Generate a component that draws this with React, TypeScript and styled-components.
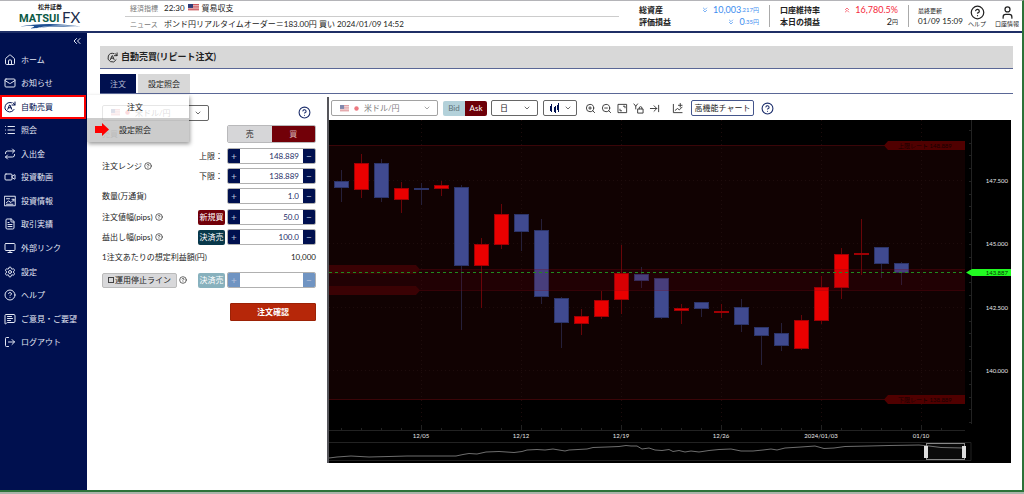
import React from "react";
import styled, { createGlobalStyle, css } from "styled-components";
import {
  ArrowRightToLine,
  ChevronDown,
  ChevronsDown,
  ChevronsLeft,
  ChevronsUp,
  CircleQuestionMark,
  FileText,
  House,
  List,
  LogOut,
  Mail,
  MessageSquareText,
  Monitor,
  Repeat,
  Settings,
  User,
  Video,
  ZoomIn,
  ZoomOut,
} from "lucide-react";

const NAVY = "#00104f";
const INK = "#222";
const RULE = "#5a6796";

const GlobalStyle = createGlobalStyle`
  *, *::before, *::after { box-sizing: border-box; }
  body {
    margin: 0;
    background: #fff;
    color: ${INK};
    font: 8px/12px Lato, "Noto Sans CJK JP", sans-serif;
  }
  button, input, select { font: inherit; color: inherit; margin: 0; padding: 0; }
  button { cursor: pointer; }
  a { color: inherit; text-decoration: none; }
  ul, dl, dd, h1, p { margin: 0; padding: 0; list-style: none; }
  svg { display: block; flex: none; }
`;

const Page = styled.div`
  min-height: 100vh;
  display: flex;
  flex-direction: column;
  padding-bottom: 2px;
  background: #a9b5aa;
`;

const Frame = styled.div`
  flex: 1;
  display: flex;
  flex-direction: column;
  background: #fff;
  border-top: 1px solid #b4b4b8;
  border-right: 2px solid #2c7238;
  border-bottom: 2px solid #2c7238;
`;

/* ---------- header ---------- */

const Header = styled.header`
  height: 32px;
  display: flex;
  border-bottom: 2px solid #1f2f66;
`;

const Logo = styled.a`
  width: 125px;
  padding-left: 18px;
`;

const News = styled.dl`
  flex: 1;
  padding-right: 10px;
  white-space: nowrap;
`;

const NewsRow = styled.div`
  height: 15px;
  display: flex;
  align-items: center;
  padding: 0 0 2px 5px;
  & + & { padding-bottom: 0; border-top: 1px solid #ccc; }
  dt { width: 34px; color: #777; font-size: 7px; }
  dd { display: flex; align-items: center; gap: 3px; }
`;

const Account = styled.div`
  display: flex;
  align-items: center;
`;

const Figures = styled.dl<{ $width: number }>`
  width: ${(p) => p.$width}px;
  height: 22px;
  padding: 0 10px;
  border-right: 1px solid #aaa;
  display: flex;
  flex-direction: column;
  justify-content: center;
  div { display: flex; justify-content: space-between; height: 13px; align-items: center; }
  dt { font-weight: 700; }
`;

const Amount = styled.dd<{ $tone?: string }>`
  display: flex;
  align-items: center;
  color: ${(p) => p.$tone ?? INK};
  font-size: 9px;
  small { font-size: 6px; }
  svg { margin-right: 4px; }
`;

const Updated = styled.p`
  width: 53px;
  padding-left: 9px;
  line-height: 11px;
  white-space: nowrap;
  small { display: block; font-size: 6px; }
`;

const HeaderButton = styled.button`
  width: 30px;
  border: 0;
  background: none;
  display: flex;
  flex-direction: column;
  align-items: center;
  font-size: 6px;
  line-height: 8px;
  white-space: nowrap;
`;

/* ---------- side menu ---------- */

const Columns = styled.div`
  flex: 1;
  display: flex;
`;

const Side = styled.nav`
  width: 87px;
  flex: none;
  background: ${NAVY};
  color: #e4e8f4;
`;

const Collapse = styled.button`
  display: block;
  width: 100%;
  height: 15px;
  padding-right: 4px;
  border: 0;
  background: none;
  svg { margin-left: auto; }
`;

const Menu = styled.ul`
  height: 306px;
  display: flex;
  flex-direction: column;
`;

const MenuItem = styled.li`
  flex: 1;
  display: flex;
  position: relative;
`;

const MenuLink = styled.a<{ $active?: boolean }>`
  flex: 1;
  display: flex;
  align-items: center;
  gap: 5px;
  padding-left: 4px;
  white-space: nowrap;
  ${(p) =>
    p.$active &&
    css`
      margin-right: 1px;
      padding-left: 2px;
      border: 2px solid #f00;
      background: #fff;
      color: ${NAVY};
    `}
`;

const SubMenu = styled.ul`
  position: absolute;
  z-index: 2;
  left: 87px;
  top: 0;
  width: 102px;
  box-shadow: 1px 2px 4px rgba(0, 0, 0, 0.4);
`;

const SubLink = styled.a<{ $current?: boolean }>`
  display: flex;
  align-items: center;
  justify-content: center;
  position: relative;
  height: ${(p) => (p.$current ? 24 : 23)}px;
  padding-right: 6px;
  color: ${INK};
  background: ${(p) => (p.$current ? "rgba(200,200,200,.92)" : "rgba(255,255,255,.84)")};
  svg { position: absolute; left: 8px; top: 5px; }
`;

/* ---------- main ---------- */

const Main = styled.main`
  flex: 1;
  min-width: 0;
  padding: 13px 9px 27px 13px;
`;

const Title = styled.h1`
  height: 23px;
  display: flex;
  align-items: center;
  gap: 3px;
  padding-left: 7px;
  background: #d8d8d8;
  border-bottom: 1px solid ${RULE};
  font-size: 9px;
`;

const Tabs = styled.div`
  display: flex;
  gap: 2px;
  margin-top: 5px;
  border-bottom: 1px solid ${RULE};
`;

const Tab = styled.button<{ $on?: boolean }>`
  height: 19px;
  padding: 0 10px;
  border: 0;
  background: ${(p) => (p.$on ? NAVY : "#d8d8d8")};
  color: ${(p) => (p.$on ? "#b5bcd4" : INK)};
`;

const Body = styled.div`
  display: grid;
  grid-template-columns: 227px minmax(0, 1fr);
  margin-top: 3px;
`;

/* ---------- order form ---------- */

const Form = styled.form`
  display: flex;
  flex-direction: column;
  padding: 8px 11px 0 2px;
`;

const Row = styled.div<{ $top?: number; $height?: number }>`
  display: flex;
  align-items: center;
  height: ${(p) => p.$height ?? 20}px;
  margin-top: ${(p) => p.$top ?? 0}px;
  white-space: nowrap;
`;

const RowLabel = styled.span`
  flex: 1;
  display: flex;
  align-items: center;
  gap: 2px;
`;

const RangeGroup = styled.div`
  display: flex;
  align-items: center;
  margin-top: 3px;
`;

const RangeRow = styled(Row)`
  gap: 4px;
`;

const SelectBox = styled.span<{ $width: number; $muted?: boolean; $tight?: boolean }>`
  width: ${(p) => p.$width}px;
  height: 16px;
  display: flex;
  align-items: center;
  gap: ${(p) => (p.$tight ? 1 : 3)}px;
  padding: ${(p) => (p.$tight ? "0 4px 0 6px" : "0 6px 0 8px")};
  border: 1px solid #666;
  border-radius: 2px;
  background: #fff;
  opacity: ${(p) => (p.$muted ? 0.6 : 1)};
  select {
    flex: 1;
    min-width: 0;
    appearance: none;
    border: 0;
    background: none;
  }
`;

const HelpButton = styled.button`
  border: 0;
  background: none;
  color: #1b2d6b;
`;

const Sides = styled.div`
  width: 89px;
  height: 18px;
  margin-left: auto;
  display: flex;
  border: 1px solid #b9b9bb;
  border-radius: 2px;
  overflow: hidden;
`;

const SideButton = styled.button<{ $buy?: boolean }>`
  flex: 1;
  border: 0;
  background: ${(p) => (p.$buy ? "#720008" : "#d6d6d8")};
  color: ${(p) => (p.$buy ? "#d3aeb0" : INK)};
`;

const Tag = styled.span<{ $color: string }>`
  width: 27px;
  height: 15px;
  margin-right: 2px;
  border-radius: 2px;
  background: ${(p) => p.$color};
  color: #fff;
  text-align: center;
  line-height: 15px;
`;

const StepperBox = styled.span<{ $off?: boolean }>`
  width: 89px;
  height: 16px;
  display: flex;
  border: 1px solid #b0b0b0;
  border-radius: 2px;
  overflow: hidden;
  button {
    width: 12px;
    border: 0;
    background: ${(p) => (p.$off ? "#7094c2" : NAVY)};
    color: #b9c2dc;
    font-size: 10px;
  }
  input {
    flex: 1;
    min-width: 0;
    padding-right: 4px;
    border: 0;
    background: #fff;
    color: #1d2c66;
    text-align: right;
  }
`;

const StopToggle = styled.label`
  display: flex;
  align-items: center;
  justify-content: center;
  gap: 1px;
  width: 75px;
  height: 15px;
  border: 1px solid #bbb;
  border-radius: 2px;
  background: #d8d8da;
  input {
    appearance: none;
    width: 6px;
    height: 6px;
    border: 1px solid #444;
  }
`;

const Submit = styled.button`
  width: 86px;
  height: 18px;
  margin: 13px 0 0 auto;
  border: 1px solid #9c2206;
  border-radius: 1px;
  background: #b62709;
  color: #fff;
  font-weight: 700;
`;

/* ---------- chart panel ---------- */

const ChartPanel = styled.section`
  padding-right: 2px;
  border-left: 2px solid #55555a;
`;

const Toolbar = styled.div`
  display: flex;
  align-items: center;
  height: 23px;
  padding: 0 2px 1px;
`;

const ToolSpace = styled.span<{ $w: number }>`
  width: ${(p) => p.$w}px;
`;

const PriceSide = styled.button<{ $on?: boolean }>`
  width: 22px;
  height: 15px;
  border: 0;
  border-radius: ${(p) => (p.$on ? "0 2px 2px 0" : "2px 0 0 2px")};
  background: ${(p) => (p.$on ? "#6d0008" : "#b3d1da")};
  color: ${(p) => (p.$on ? "#fff" : "#5f7278")};
`;

const Tools = styled.div`
  display: flex;
  align-items: center;
  gap: 5px;
`;

const Tool = styled.button`
  display: block;
  border: 0;
  background: none;
  color: #333;
`;

const AdvancedButton = styled.button`
  width: 63px;
  height: 16px;
  border: 1px solid #44558c;
  border-radius: 2px;
  background: #fff;
  white-space: nowrap;
`;

const ChartSvg = styled.svg`
  width: 100%;
  height: auto;
  background: #000;
  font-family: Lato, "Noto Sans CJK JP", sans-serif;
`;

/* ---------- drawings ---------- */

const line = {
  fill: "none",
  stroke: "currentColor",
  strokeWidth: 2,
  strokeLinecap: "round" as const,
  strokeLinejoin: "round" as const,
  viewBox: "0 0 24 24",
};

const AutoIcon = ({ size = 12 }: { size?: number }) => (
  <svg {...line} width={size} height={size}>
    <path d="M15 3.500A9.500 9.500 0 1 0 20 17" />
    <path d="M16 8h6V2M22 8l-4-4.500" />
    <path d="M7.500 16.500L11 8h1l3.500 8.500M9 13.500h5" />
  </svg>
);

const InfoIcon = () => (
  <svg {...line} width={12} height={12}>
    <path d="M1.500 2.500h21v19h-21zM5 7.500h6M5 15l4-3 5 3 6-6M16 8.500h4v4M5 18.500h13" />
  </svg>
);

const FitIcon = () => (
  <svg {...line} width={11} height={11}>
    <path d="M3 3h18v18H3zM14 7h3.500v3.500M6.500 13.500V17H10" />
  </svg>
);

const AxisLockIcon = () => (
  <svg {...line} width={11} height={11}>
    <path d="M2 2l4 5 4-5M6 7v6M11 13h11v9H11zM13.500 13v-2a3 3 0 0 1 6 0v2" />
  </svg>
);

const AddIndicatorIcon = () => (
  <svg {...line} width={11} height={11}>
    <path d="M3 3v18h19M7 16l5-4 4 3 6-6M18 1v8M14 5h8" />
  </svg>
);

const CandlesIcon = () => (
  <svg width={10} height={10} viewBox="0 0 10 10" fill={NAVY}>
    <path d="M0 3h2v5H0zM4 4h2v5H4zM7 2h2v5H7zM1 1h1v8H1zM5 3h1v7H5zM8 0h1v9H8z" />
  </svg>
);

const UsFlag = ({ w = 9 }: { w?: number }) => (
  <svg width={w} height={7} viewBox="0 0 11 8" preserveAspectRatio="none">
    <path fill="#f3dcdc" d="M0 0h11v8H0z" />
    <path stroke="#c8444e" strokeWidth="1" d="M0 .5h11M0 2.500h11M0 4.500h11M0 6.500h11" />
    <path fill="#2f3c78" d="M0 0h5v4.500H0z" />
  </svg>
);

const JpFlag = () => (
  <svg width={9} height={7} viewBox="0 0 9 7">
    <path fill="#fff" d="M0 0h9v7H0z" />
    <circle cx="4.500" cy="3.500" r="2.200" fill="#e2202c" />
  </svg>
);

const LogoMark = () => (
  <svg width={66} height={29} viewBox="0 0 66 29">
    <text x="20" y="8" fontSize="6" fontWeight="700" fill="#222" fontFamily="Lato, 'Noto Sans CJK JP', sans-serif">
      松井証券
    </text>
    <text x="1" y="21" fontSize="11" fontWeight="700" fill="#0c5a45" fontFamily="Roboto, sans-serif">
      MATSUI
    </text>
    <text x="44" y="22" fontSize="15" fill="#1c2c4c" fontFamily="Lato, sans-serif">
      FX
    </text>
    <path d="M2 25.500C18 22 42 22 63 25.500C42 23.800 28 24.500 16 27.500Q32 24 63 25.500Q30 25 12 27.500Q24 23.500 2 25.500Z" fill="#1d4f93" />
  </svg>
);

const RedArrow = () => (
  <svg width={14} height={13} viewBox="0 0 14 13">
    <path d="M0 3h7V0l7 6.500L7 13v-3H0z" fill="#f00" />
  </svg>
);

/* ---------- chart ---------- */

type Candle = [up: 0 | 1, high: number, top: number, bottom: number, low: number];

const candles: Candle[] = [
  [0, 50, 61, 68, 82],
  [1, 34, 43, 70, 78],
  [0, 39, 43, 78, 82],
  [1, 62, 68, 80, 93],
  [0, 63, 68, 70, 85],
  [1, 61, 65, 69, 76],
  [0, 65, 67, 146, 210],
  [1, 118, 124, 146, 188],
  [1, 84, 94, 125, 129],
  [0, 94, 94, 112, 131],
  [0, 99, 110, 177, 184],
  [0, 177, 178, 203, 228],
  [1, 189, 196, 204, 215],
  [1, 171, 180, 197, 199],
  [1, 125, 153, 180, 194],
  [0, 147, 154, 161, 168],
  [0, 158, 158, 198, 199],
  [1, 184, 188, 191, 204],
  [0, 182, 182, 189, 197],
  [1, 184, 191, 193, 198],
  [0, 179, 187, 205, 212],
  [0, 207, 207, 216, 245],
  [0, 203, 213, 226, 231],
  [1, 195, 200, 229, 230],
  [1, 156, 167, 201, 204],
  [1, 128, 134, 168, 179],
  [1, 99, 133, 135, 155],
  [0, 127, 127, 144, 158],
  [0, 142, 143, 153, 165],
];

const dates = ["12/05", "12/12", "12/19", "12/26", "2024/01/03", "01/10"];
const prices: [string, number][] = [
  ["147.500", 61],
  ["145.000", 124],
  ["142.500", 188],
  ["140.000", 251],
];

const overview =
  "0,338 8,337 22,336 40,337 60,336.500 78,336 127,336 134,334.500 140,333.500 148,334 157,332 170,331.500 185,332.500 193,331.500 198,330 208,329.500 216,330 224,329 230,330 236,331 240,330 258,329 264,327.500 278,327 290,326.500 297,325.500 302,326 308,326 313,329 320,328 326,330 333,330.500 340,329.500 344,331.500 350,330.500 356,332 362,331 370,332 380,330.500 390,329.500 402,329 412,331 424,331 434,330 442,329 448,330 456,328 472,327 486,326 495,328.500 505,328 516,326.500 540,326 560,325.500 590,325 600,326 612,327.500 635,328";

const Chart = () => (
  <ChartSvg viewBox="0 0 682 343" role="img" aria-label="米ドル/円 日足チャート">
    <rect y="25" width="636" height="254" fill="#110202" />
    <path d="M0 25.500h636M0 279.500h636" stroke="#3a0508" />
    <g stroke="#1e0c0c" strokeDasharray="1 3">
      {prices.map(([, y]) => (
        <path key={y} d={`M0 ${y - 0.5}H636`} />
      ))}
      {dates.map((d, i) => (
        <path key={d} d={`M${92.5 + i * 100} 0V304`} />
      ))}
    </g>
    {candles.map(([up, high, top, bottom, low], i) => (
      <g key={i}>
        <path d={`M${12.5 + i * 20} ${high}V${low}`} stroke={up ? "#680508" : "#26203a"} />
        <rect
          x={5.5 + i * 20}
          y={top + 0.5}
          width={14}
          height={Math.max(bottom - top - 1, 1)}
          fill={up ? "#ea0000" : "#404a90"}
          stroke={up ? "#a00004" : "#2c3468"}
        />
      </g>
    ))}
    <rect y="149" width="636" height="22" fill="rgba(120,0,20,.16)" />
    <path d="M0 149.500h636M0 170.500h636" stroke="rgba(140,10,20,.2)" />
    <path d="M0 145h87l4 4.500-4 4.500H0zM0 166h87l4 4.500-4 4.500H0z" fill="#3a0204" />
    <path d="M636 21h-77l-4 4.500 4 4.500h77zM636 275h-77l-4 4.500 4 4.500h77z" fill="#500000" />
    <path d="M0 152.500h636" stroke="#1f8a1f" strokeDasharray="3 3" />
    <g fontSize="6" fill="#170000">
      <text x="569" y="28">上限レート 148.889</text>
      <text x="569" y="282">下限レート 138.889</text>
    </g>
    <g stroke="#222">
      <path d="M642.500 0V304M0 310.500H636M0 322.500H642V340.500H0" fill="none" />
      {Array.from({ length: 24 }, (_, i) => (
        <path key={i} d={`M640 ${Math.round(10 + i * 12.7) + 0.5}h2`} />
      ))}
      {Array.from({ length: 31 }, (_, i) => (
        <path key={i} d={`M${12.5 + i * 20} ${i % 5 === 4 ? 305 : 308}V310`} />
      ))}
    </g>
    <g fontSize="6" fill="#e8e8e8">
      {prices.map(([label, y]) => (
        <text key={label} x="679" y={y + 2} textAnchor="end">
          {label}
        </text>
      ))}
      {dates.map((d, i) => (
        <text key={d} x={92 + i * 100} y="318" textAnchor="middle">
          {d}
        </text>
      ))}
    </g>
    <path d="M637 152.500l6-3.500h39v7h-39z" fill="#22fa22" />
    <text x="679" y="155" textAnchor="end" fontSize="6" fill="#063806">
      143.887
    </text>
    <polyline points={overview} fill="none" stroke="#8a8a8a" strokeWidth="0.800" />
    <rect x="597.500" y="323.500" width="38" height="16" fill="rgba(255,255,255,.04)" stroke="#888" />
    <path d="M595 326h4v12h-4zM633 326h4v12h-4z" fill="#ddd" />
  </ChartSvg>
);

/* ---------- parts ---------- */

const Help = ({ size }: { size: number }) => <CircleQuestionMark size={size} />;

type StepperProps = { label: string; value: string; off?: boolean };

const Stepper = ({ label, value, off }: StepperProps) => (
  <StepperBox $off={off}>
    <button type="button" disabled={off} aria-label={`${label}を増やす`}>+</button>
    <input aria-label={label} defaultValue={value} disabled={off} />
    <button type="button" disabled={off} aria-label={`${label}を減らす`}>−</button>
  </StepperBox>
);

const PairSelect = ({ muted }: { muted?: boolean }) => (
  <SelectBox $width={107} $muted={muted}>
    <UsFlag />
    <JpFlag />
    <select aria-label="通貨ペア">
      <option>米ドル/円</option>
    </select>
    <ChevronDown size={8} />
  </SelectBox>
);

const menu: { label: string; icon: React.ReactNode; active?: boolean }[] = [
  { label: "ホーム", icon: <House size={12} /> },
  { label: "お知らせ", icon: <Mail size={12} /> },
  { label: "自動売買", icon: <AutoIcon />, active: true },
  { label: "照会", icon: <List size={12} /> },
  { label: "入出金", icon: <Repeat size={12} /> },
  { label: "投資動画", icon: <Video size={12} /> },
  { label: "投資情報", icon: <InfoIcon /> },
  { label: "取引実績", icon: <FileText size={12} /> },
  { label: "外部リンク", icon: <Monitor size={12} /> },
  { label: "設定", icon: <Settings size={12} /> },
  { label: "ヘルプ", icon: <Help size={12} /> },
  { label: "ご意見・ご要望", icon: <MessageSquareText size={12} /> },
  { label: "ログアウト", icon: <LogOut size={12} /> },
];

export default function App() {
  return (
    <Page lang="ja">
      <GlobalStyle />
      <Frame>
        <Header>
          <Logo href="#" aria-label="松井証券 MATSUI FX">
            <LogoMark />
          </Logo>
          <News>
            <NewsRow>
              <dt>経済指標</dt>
              <dd>
                <span>22:30</span>
                <UsFlag w={11} />
                <span>貿易収支</span>
              </dd>
            </NewsRow>
            <NewsRow>
              <dt>ニュース</dt>
              <dd>ポンド円リアルタイムオーダー＝183.00円 買い 2024/01/09 14:52</dd>
            </NewsRow>
          </News>
          <Account>
            <Figures $width={141}>
              <div>
                <dt>総資産</dt>
                <Amount $tone="#3d8df0"><ChevronsDown size={8} />10,003<small>.217円</small></Amount>
              </div>
              <div>
                <dt>評価損益</dt>
                <Amount $tone="#3d8df0"><ChevronsDown size={8} />0<small>.35円</small></Amount>
              </div>
            </Figures>
            <Figures $width={139}>
              <div>
                <dt>口座維持率</dt>
                <Amount $tone="#f5283c"><ChevronsUp size={8} />16,780.5%</Amount>
              </div>
              <div>
                <dt>本日の損益</dt>
                <Amount>2<small>円</small></Amount>
              </div>
            </Figures>
            <Updated>
              <small>最終更新</small>
              01/09 15:09
            </Updated>
            <HeaderButton><Help size={15} />ヘルプ</HeaderButton>
            <HeaderButton><User size={15} />口座情報</HeaderButton>
          </Account>
        </Header>

        <Columns>
          <Side>
            <Collapse aria-label="メニューを閉じる"><ChevronsLeft size={12} /></Collapse>
            <Menu>
              {menu.map(({ label, icon, active }) => (
                <MenuItem key={label}>
                  <MenuLink href="#" $active={active}>{icon}{label}</MenuLink>
                  {active && (
                    <SubMenu>
                      <li><SubLink href="#">注文</SubLink></li>
                      <li><SubLink href="#" $current><RedArrow />設定照会</SubLink></li>
                    </SubMenu>
                  )}
                </MenuItem>
              ))}
            </Menu>
          </Side>

          <Main>
            <Title><AutoIcon size={11} />自動売買(リピート注文)</Title>
            <Tabs role="tablist">
              <Tab role="tab" aria-selected="true" $on>注文</Tab>
              <Tab role="tab" aria-selected="false">設定照会</Tab>
            </Tabs>
            <Body>
              <Form onSubmit={(e) => e.preventDefault()}>
                <Row $height={15}>
                  <RowLabel><PairSelect /></RowLabel>
                  <HelpButton type="button" aria-label="ヘルプ"><Help size={13} /></HelpButton>
                  <ToolSpace $w={5} />
                </Row>
                <Row $top={5} $height={18}>
                  売買
                  <Sides>
                    <SideButton type="button">売</SideButton>
                    <SideButton type="button" $buy>買</SideButton>
                  </Sides>
                </Row>
                <RangeGroup>
                  <RowLabel>注文レンジ <Help size={8} /></RowLabel>
                  <div>
                    <RangeRow>上限： <Stepper label="上限" value="148.889" /></RangeRow>
                    <RangeRow>下限： <Stepper label="下限" value="138.889" /></RangeRow>
                  </div>
                </RangeGroup>
                <Row>
                  <RowLabel>数量(万通貨)</RowLabel>
                  <Stepper label="数量(万通貨)" value="1.0" />
                </Row>
                <Row $top={1}>
                  <RowLabel>注文値幅(pips) <Help size={8} /></RowLabel>
                  <Tag $color="#720008">新規買</Tag>
                  <Stepper label="注文値幅(pips)" value="50.0" />
                </Row>
                <Row>
                  <RowLabel>益出し幅(pips) <Help size={8} /></RowLabel>
                  <Tag $color="#08384a">決済売</Tag>
                  <Stepper label="益出し幅(pips)" value="100.0" />
                </Row>
                <Row>
                  <RowLabel>1注文あたりの想定利益額(円)</RowLabel>
                  10,000
                </Row>
                <Row $top={3}>
                  <RowLabel>
                    <StopToggle><input type="checkbox" />運用停止ライン</StopToggle>
                    <Help size={8} />
                  </RowLabel>
                  <Tag $color="#88b1bd">決済売</Tag>
                  <Stepper label="運用停止ライン" value="" off />
                </Row>
                <Submit type="submit">注文確認</Submit>
              </Form>

              <ChartPanel>
                <Toolbar>
                  <PairSelect muted />
                  <ToolSpace $w={5} />
                  <PriceSide>Bid</PriceSide>
                  <PriceSide $on>Ask</PriceSide>
                  <ToolSpace $w={4} />
                  <SelectBox $width={47}>
                    <select aria-label="足種"><option>日</option></select>
                    <ChevronDown size={8} />
                  </SelectBox>
                  <ToolSpace $w={5} />
                  <SelectBox $width={34} $tight>
                    <CandlesIcon />
                    <select aria-label="チャート種別"><option aria-label="ローソク足" /></select>
                    <ChevronDown size={8} />
                  </SelectBox>
                  <ToolSpace $w={8} />
                  <Tools>
                    <Tool aria-label="拡大"><ZoomIn size={11} /></Tool>
                    <Tool aria-label="縮小"><ZoomOut size={11} /></Tool>
                    <Tool aria-label="全体表示"><FitIcon /></Tool>
                    <Tool aria-label="Y軸固定"><AxisLockIcon /></Tool>
                    <Tool aria-label="最新へ移動"><ArrowRightToLine size={11} /></Tool>
                  </Tools>
                  <ToolSpace $w={12} />
                  <Tool aria-label="指標を追加"><AddIndicatorIcon /></Tool>
                  <ToolSpace $w={8} />
                  <AdvancedButton>高機能チャート</AdvancedButton>
                  <ToolSpace $w={7} />
                  <HelpButton aria-label="チャートのヘルプ"><Help size={13} /></HelpButton>
                </Toolbar>
                <Chart />
              </ChartPanel>
            </Body>
          </Main>
        </Columns>
      </Frame>
    </Page>
  );
}
